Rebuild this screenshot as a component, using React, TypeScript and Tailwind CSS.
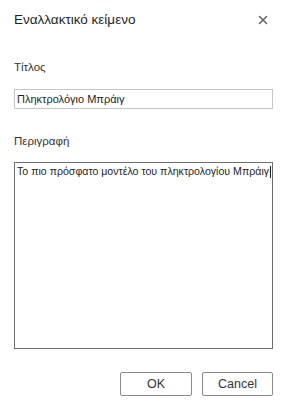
import { X } from 'lucide-react';

export default function App() {
  return (
    <div
      className="flex h-[408px] w-[287px] flex-col bg-white px-[14px] text-[#262626]"
      style={{ fontFamily: '"Liberation Sans", Arial, sans-serif' }}
    >
      <div className="mt-[10px] flex h-[20px] items-center justify-between">
        <div className="text-[13.5px] leading-[20px] text-[#1f1f1f]">Εναλλακτικό κείμενο</div>
        <button className="mr-[3px] flex h-[14px] w-[14px] items-center justify-center text-[#666666]">
          <X size={14} strokeWidth={2.8} />
        </button>
      </div>

      <div className="mt-[29px] text-[11.5px] leading-[16px] text-[#333333]">Τίτλος</div>
      <input
        readOnly
        value="Πληκτρολόγιο Μπράιγ"
        className="mt-[14px] h-[20px] w-full border border-[#c6c6c6] px-[2px] text-[11px] text-[#1f1f1f] outline-none"
      />

      <div className="mt-[24px] text-[11.5px] leading-[16px] text-[#333333]">Περιγραφή</div>
      <div className="mt-[13px] h-[187px] w-full whitespace-nowrap border border-[#6e6e6e] px-[2px] pt-[1px] text-[10.6px] leading-[15px] text-[#1f1f1f]">
        Το πιο πρόσφατο μοντέλο του πληκτρολογίου Μπράιγ
        <span className="ml-[1px] inline-block h-[12px] w-[1px] align-middle bg-[#1f1f1f]" />
      </div>

      <div className="mt-[23px] flex justify-end gap-[10px]">
        <button className="h-[24px] w-[72px] rounded-[2px] border border-[#8a8a8a] bg-white text-[12.5px] text-[#333333]">
          OK
        </button>
        <button className="h-[24px] w-[71px] rounded-[2px] border border-[#8a8a8a] bg-white text-[12.5px] text-[#333333]">
          Cancel
        </button>
      </div>
    </div>
  );
}
